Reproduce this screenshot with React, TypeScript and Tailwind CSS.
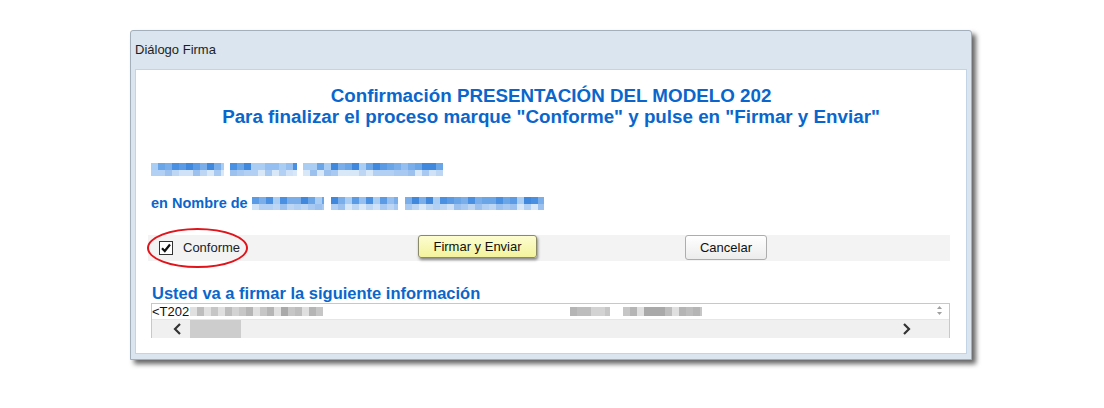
import React from "react";

const blueTop = ["#4a90e2", "#5b9be6", "#7aaeea", "#94bff0", "#aacdf3", "#3f88de", "#6aa5e8"];
const blueBot = ["#a8c9f1", "#bcd6f4", "#cfe2f7", "#9cc1ef", "#d9e8f9", "#b2d0f3"];
const grayTop = ["#b5b5b5", "#c6c6c6", "#a9a9a9", "#d3d3d3", "#bdbdbd", "#e0e0e0"];

function rnd(seed: number) {
  let s = seed;
  return () => {
    s = (s * 9301 + 49297) % 233280;
    return s / 233280;
  };
}

function Pix({ w, seed, gray }: { w: number; seed: number; gray?: boolean }) {
  const r = rnd(seed);
  const n = Math.ceil(w / 7);
  const cells = (pal: string[]) =>
    Array.from({ length: n }).map((_, i) => (
      <span
        key={i}
        className="block h-full"
        style={{ width: i === n - 1 ? w - 7 * (n - 1) : 7, background: pal[Math.floor(r() * pal.length)] }}
      />
    ));
  if (gray) {
    return <span className="flex h-[9px] blur-[0.5px]" style={{ width: w }}>{cells(grayTop)}</span>;
  }
  return (
    <span className="flex flex-col blur-[0.5px]" style={{ width: w }}>
      <span className="flex h-[7px]">{cells(blueTop)}</span>
      <span className="flex h-[6px]">{cells(blueBot)}</span>
    </span>
  );
}

export default function App() {
  const font = { fontFamily: '"Liberation Sans", Arial, sans-serif' };
  return (
    <div className="min-h-[408px] w-[1104px] bg-white pt-[30px] pl-[130px]" style={font}>
      <div className="w-[842px] h-[330px] border border-[#a3afbb] bg-[#dae5ef] rounded-t-[3px] shadow-[4px_4px_5px_rgba(0,0,0,0.6)] flex flex-col">
        <div className="h-[38px] pl-[4px] flex items-center text-[13px] text-[#1e1e1e]">Diálogo Firma</div>
        <div className="mx-[4px] mb-[5px] flex-1 bg-white border border-[#c3d4e6] flex flex-col">
          <div className="pt-[16px] text-center text-[18.8px] leading-[20.5px] font-bold text-[#0a66cc]">
            <div>Confirmación PRESENTACIÓN DEL MODELO 202</div>
            <div>Para finalizar el proceso marque "Conforme" y pulse en "Firmar y Enviar"</div>
          </div>

          <div className="mt-[36px] ml-[15px] flex gap-[6px]">
            <Pix w={73} seed={11} />
            <Pix w={67} seed={23} />
            <Pix w={140} seed={37} />
          </div>

          <div className="mt-[19px] ml-[15px] h-[17px] flex items-center">
            <span className="text-[14.5px] font-bold text-[#0a66cc] mr-[4px]">en Nombre de</span>
            <span className="flex gap-[7px]">
              <Pix w={72} seed={51} />
              <Pix w={67} seed={63} />
              <Pix w={139} seed={79} />
            </span>
          </div>

          <div className="relative mt-[23px] ml-[12px] mr-[16px] h-[26px] bg-[#f3f3f3] flex items-start">
            <div className="w-[270px] h-[26px] flex items-center pl-[11px]">
              <span className="w-[14px] h-[14px] border border-[#333] bg-white flex items-center justify-center">
                <svg width="12" height="12" viewBox="0 0 12 12">
                  <path d="M2 6.2 L4.8 9 L10 2.5" fill="none" stroke="#111" strokeWidth="2.2" />
                </svg>
              </span>
              <span className="ml-[10px] text-[13px] text-[#222]">Conforme</span>
            </div>
            <button className="w-[119px] h-[23px] rounded-[3px] border border-[#8a8a6a] bg-gradient-to-b from-[#fdfdd0] to-[#f3f39c] text-[13px] text-[#111] shadow-[1px_2px_3px_rgba(0,0,0,0.45)]">
              Firmar y Enviar
            </button>
            <div className="w-[148px]" />
            <button className="w-[82px] h-[25px] rounded-[3px] border border-[#adadad] bg-gradient-to-b from-[#ffffff] to-[#ececec] text-[13px] text-[#111]">
              Cancelar
            </button>
            <div className="absolute left-[-1px] top-[-7px] w-[101px] h-[40px] rounded-[50%] border-2 border-[#e2141b]" />
          </div>

          <div className="mt-[23px] ml-[16px] text-[16.5px] leading-[19px] font-bold text-[#0a66cc]">
            Usted va a firmar la siguiente información
          </div>

          <div className="ml-[15px] mr-[16px] h-[35px] border border-[#c8c8c8] flex flex-col">
            <div className="h-[15px] bg-white flex items-center relative">
              <span className="text-[13px] leading-[15px] text-[#111]">&lt;T202</span>
              <span className="ml-[1px]"><Pix w={133} seed={91} gray /></span>
              <span className="ml-[247px]"><Pix w={40} seed={97} gray /></span>
              <span className="ml-[13px]"><Pix w={79} seed={101} gray /></span>
              <span className="absolute right-[7px] top-[2px] flex flex-col gap-[3px]">
                <svg width="5" height="3" viewBox="0 0 5 3"><path d="M0 3 L2.5 0 L5 3Z" fill="#a0a0a0" /></svg>
                <svg width="5" height="3" viewBox="0 0 5 3"><path d="M0 0 L2.5 3 L5 0Z" fill="#a0a0a0" /></svg>
              </span>
            </div>
            <div className="flex-1 bg-[#f0f0f0] flex items-center border-t border-[#e6e6e6]">
              <svg className="ml-[21px]" width="9" height="12" viewBox="0 0 9 12">
                <path d="M7 1 L2 6 L7 11" fill="none" stroke="#333" strokeWidth="2.2" />
              </svg>
              <span className="ml-[8px] w-[51px] h-[18px] bg-[#cdcdcd]" />
              <span className="flex-1" />
              <svg className="mr-[38px]" width="9" height="12" viewBox="0 0 9 12">
                <path d="M2 1 L7 6 L2 11" fill="none" stroke="#333" strokeWidth="2.2" />
              </svg>
            </div>
          </div>
        </div>
      </div>
    </div>
  );
}
